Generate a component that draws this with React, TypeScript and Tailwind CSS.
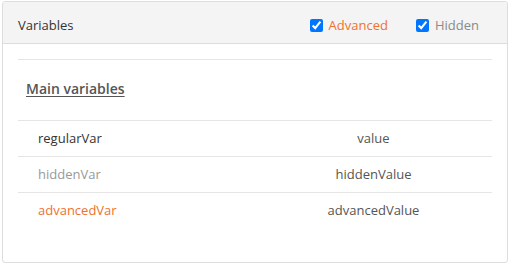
import React from "react";

const rows = [
  { name: "regularVar", value: "value", cls: "text-[#333333]" },
  { name: "hiddenVar", value: "hiddenValue", cls: "text-[#999999]" },
  { name: "advancedVar", value: "advancedValue", cls: "text-[#f0712c]" },
];

export default function App() {
  return (
    <div className="w-[510px] h-[266px] bg-white pt-px px-[2px]" style={{ fontFamily: '"Open Sans", sans-serif' }}>
      <div className="h-[262px] border border-[#dddddd] rounded-[3px] bg-white flex flex-col">
        <div className="h-[42px] bg-[#f4f4f4] border-b border-[#dddddd] flex items-center pt-[6px] pl-[15px] pr-[28px] rounded-t-[3px]">
          <div className="text-[13px] text-[#333333] flex-1">Variables</div>
          <label className="flex items-center text-[13px] text-[#f0712c]">
            <input type="checkbox" defaultChecked className="w-[13px] h-[13px] m-0 mr-[6px] accent-[#0075ff]" />
            Advanced
          </label>
          <label className="flex items-center text-[13px] text-[#8a8a8a] ml-[28px]">
            <input type="checkbox" defaultChecked className="w-[13px] h-[13px] m-0 mr-[6px] accent-[#0075ff]" />
            Hidden
          </label>
        </div>
        <div className="px-[15px] pt-[15px]">
          <div className="border-t border-[#e5e5e5]">
            <div className="h-[60px] flex items-center pl-[8px] pb-[4px]">
              <span className="text-[14px] font-semibold text-[#555555] underline underline-offset-2">Main variables</span>
            </div>
            {rows.map((r) => (
              <div key={r.name} className="flex h-[36px] items-center border-t border-[#e5e5e5] text-[13px]">
                <div className={`w-1/2 pl-[20px] ${r.cls}`}>{r.name}</div>
                <div className="w-1/2 text-center text-[#555555]">{r.value}</div>
              </div>
            ))}
          </div>
        </div>
      </div>
    </div>
  );
}
